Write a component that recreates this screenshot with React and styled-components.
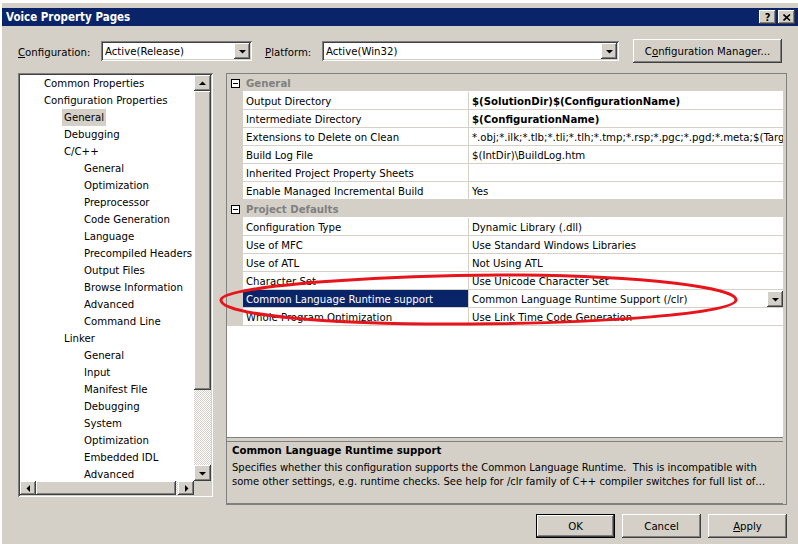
import React from 'react';
import styled, { createGlobalStyle, css } from 'styled-components';

const FACE = '#D4D0C8';
const SHADOW = '#808080';
const DARK = '#404040';
const NAVY = '#0A246A';

const GlobalStyle = createGlobalStyle`
  html, body {
    margin: 0;
    padding: 0;
    background: #fff;
  }
  body {
    font-family: "DejaVu Sans Condensed", "Liberation Sans", sans-serif;
    font-size: 11.3px;
    color: #000;
  }
  #root {
    width: 798px;
    height: 544px;
    overflow: hidden;
  }
`;

const raised = css`
  box-shadow: inset -1px -1px ${DARK}, inset 1px 1px #fff,
    inset -2px -2px ${SHADOW}, inset 2px 2px ${FACE};
`;

const sunken = css`
  box-shadow: inset 1px 1px ${SHADOW}, inset -1px -1px #fff,
    inset 2px 2px ${DARK}, inset -2px -2px ${FACE};
`;

const Page = styled.div`
  position: relative;
  width: 798px;
  height: 544px;
`;

const Frame = styled.div`
  margin: 2px 0 0 1px;
  height: 542px;
  box-sizing: border-box;
  background: ${FACE};
  border-top: 1px solid #fff;
  border-left: 1px solid #fff;
  padding-top: 5px;
  display: flex;
  flex-direction: column;
`;

const TitleBar = styled.div`
  height: 18px;
  background: ${NAVY};
  display: flex;
  align-items: center;
  padding: 0 3px 0 4px;
  color: #fff;
  font-weight: bold;
  font-size: 11.5px;
`;

const TitleText = styled.div`
  flex: 1;
`;

const CaptionButton = styled.div`
  width: 17px;
  height: 14px;
  margin-left: 2px;
  box-sizing: border-box;
  background: ${FACE};
  ${raised};
  color: #000;
  font-size: 11px;
  font-weight: bold;
  display: flex;
  align-items: center;
  justify-content: center;
`;

const Content = styled.div`
  flex: 1;
  display: flex;
  flex-direction: column;
  padding: 12px 11px 0 16px;
`;

const ConfigRow = styled.div`
  display: flex;
  align-items: center;
  height: 24px;
  padding-top: 1px;
`;

const Label = styled.div`
  width: ${p => p.$width}px;
  flex: none;
  white-space: nowrap;
  padding-top: 2px;
`;

const Combo = styled.div`
  width: ${p => p.$width}px;
  height: 20px;
  box-sizing: border-box;
  padding: 2px;
  background: #fff;
  ${sunken};
  display: flex;
  align-items: center;
  margin-right: ${p => p.$gap}px;
`;

const ComboText = styled.div`
  flex: 1;
  padding: 1px 0 0 2px;
  white-space: nowrap;
`;

const DropButton = styled.div`
  width: 16px;
  height: 16px;
  flex: none;
  box-sizing: border-box;
  background: ${FACE};
  ${raised};
  display: flex;
  align-items: center;
  justify-content: center;
`;

const PushButton = styled.div`
  width: ${p => p.$width}px;
  height: 24px;
  box-sizing: border-box;
  padding-top: 1px;
  background: ${FACE};
  ${raised};
  display: flex;
  align-items: center;
  justify-content: center;
  white-space: nowrap;
  ${p => p.$default && css`
    border: 1px solid #000;
  `}
`;

const Main = styled.div`
  display: flex;
  align-items: flex-start;
  gap: 13px;
  margin-top: 10px;
`;

const TreeBox = styled.div`
  width: 196px;
  height: 424px;
  box-sizing: border-box;
  padding: 2px;
  background: #fff;
  ${sunken};
  display: grid;
  grid-template-columns: 1fr 17px;
  grid-template-rows: 1fr 14px;
`;

const TreeList = styled.div`
  overflow: hidden;
`;

const TreeItem = styled.div`
  height: 17px;
  line-height: 17px;
  padding-left: ${p => 22 + p.$level * 20}px;
  white-space: nowrap;
`;

const ItemLabel = styled.span`
  display: inline-block;
  height: 17px;
  padding: 1px 2px 0;
  box-sizing: border-box;
  line-height: 16px;
  background: ${p => (p.$selected ? FACE : 'transparent')};
`;

const VScroll = styled.div`
  display: flex;
  flex-direction: column;
`;

const HScroll = styled.div`
  display: flex;
`;

const ScrollArrow = styled.div`
  flex: none;
  width: ${p => p.$w}px;
  height: ${p => p.$h}px;
  box-sizing: border-box;
  background: ${FACE};
  ${raised};
  display: flex;
  align-items: center;
  justify-content: center;
`;

const Thumb = styled.div`
  flex: none;
  width: ${p => p.$w}px;
  height: ${p => p.$h}px;
  box-sizing: border-box;
  background: ${FACE};
  ${raised};
`;

const Track = styled.div`
  flex: 1;
  background: repeating-conic-gradient(#fff 0 25%, ${FACE} 0 50%) 0 0 / 2px 2px;
`;

const Corner = styled.div`
  background: ${FACE};
`;

const Panel = styled.div`
  width: 561px;
  height: 432px;
  box-sizing: border-box;
  border: 1px solid ${SHADOW};
  background: ${FACE};
  padding-right: 3px;
  display: flex;
  flex-direction: column;
`;

const Grid = styled.div`
  height: 363px;
  flex: none;
  background: #fff;
  border-bottom: 1px solid ${SHADOW};
  overflow: hidden;
`;

const Row = styled.div`
  display: flex;
  height: 18px;
  background: ${p => (p.$category ? FACE : '#fff')};
`;

const Gutter = styled.div`
  width: 16px;
  flex: none;
  background: ${FACE};
  display: flex;
  align-items: center;
  justify-content: center;
`;

const Cell = styled.div`
  box-sizing: border-box;
  height: 18px;
  padding: 1px 0 0 3px;
  border-bottom: 1px solid ${FACE};
  white-space: nowrap;
  overflow: hidden;
  display: flex;
  align-items: center;
`;

const NameCell = styled(Cell)`
  width: 226px;
  flex: none;
  border-right: 1px solid ${FACE};
  background: ${p => (p.$selected ? NAVY : 'transparent')};
  color: ${p => (p.$selected ? '#fff' : '#000')};
`;

const ValueCell = styled(Cell)`
  flex: 1;
  min-width: 0;
  font-weight: ${p => (p.$bold ? 'bold' : 'normal')};
`;

const ValueText = styled.span`
  flex: 1;
  overflow: hidden;
`;

const CategoryCell = styled(Cell)`
  flex: 1;
  font-weight: bold;
  color: ${SHADOW};
  border-bottom: 1px solid #fff;
`;

const Description = styled.div`
  flex: 1;
  margin-top: 3px;
  border-top: 1px solid ${SHADOW};
  border-bottom: 1px solid ${SHADOW};
  padding: 2px 5px 0;
  line-height: 14px;
  font-size: 11.1px;
`;

const DescTitle = styled.div`
  font-weight: bold;
  font-size: 11.3px;
  margin-bottom: 3px;
`;

const DescLine = styled.div`
  white-space: pre;
`;

const ButtonRow = styled.div`
  display: flex;
  justify-content: flex-end;
  gap: 7px;
  margin-top: 9px;
`;

const Annotation = styled.svg`
  position: absolute;
  left: 0;
  top: 0;
  pointer-events: none;
`;

const Tri = ({ dir }) => {
  const pts = {
    up: '0,5 7,5 3.5,1.5',
    down: '0,2 7,2 3.5,5.5',
    left: '5,0 5,7 1.5,3.5',
    right: '2,0 2,7 5.5,3.5',
  };
  return (
    <svg width="7" height="7" viewBox="0 0 7 7">
      <polygon points={pts[dir]} fill="#000" />
    </svg>
  );
};

const MinusBox = () => (
  <svg width="9" height="9" viewBox="0 0 9 9">
    <rect x="0.5" y="0.5" width="8" height="8" fill="#fff" stroke="#000" />
    <line x1="2" y1="4.5" x2="7" y2="4.5" stroke="#000" />
  </svg>
);

const tree = [
  ['Common Properties', 0],
  ['Configuration Properties', 0],
  ['General', 1, true],
  ['Debugging', 1],
  ['C/C++', 1],
  ['General', 2],
  ['Optimization', 2],
  ['Preprocessor', 2],
  ['Code Generation', 2],
  ['Language', 2],
  ['Precompiled Headers', 2],
  ['Output Files', 2],
  ['Browse Information', 2],
  ['Advanced', 2],
  ['Command Line', 2],
  ['Linker', 1],
  ['General', 2],
  ['Input', 2],
  ['Manifest File', 2],
  ['Debugging', 2],
  ['System', 2],
  ['Optimization', 2],
  ['Embedded IDL', 2],
  ['Advanced', 2],
];

const props = [
  { cat: 'General' },
  { name: 'Output Directory', value: '$(SolutionDir)$(ConfigurationName)', bold: true },
  { name: 'Intermediate Directory', value: '$(ConfigurationName)', bold: true },
  { name: 'Extensions to Delete on Clean', value: '*.obj;*.ilk;*.tlb;*.tli;*.tlh;*.tmp;*.rsp;*.pgc;*.pgd;*.meta;$(TargetPath)' },
  { name: 'Build Log File', value: '$(IntDir)\\BuildLog.htm' },
  { name: 'Inherited Project Property Sheets', value: '' },
  { name: 'Enable Managed Incremental Build', value: 'Yes' },
  { cat: 'Project Defaults' },
  { name: 'Configuration Type', value: 'Dynamic Library (.dll)' },
  { name: 'Use of MFC', value: 'Use Standard Windows Libraries' },
  { name: 'Use of ATL', value: 'Not Using ATL' },
  { name: 'Character Set', value: 'Use Unicode Character Set' },
  { name: 'Common Language Runtime support', value: 'Common Language Runtime Support (/clr)', selected: true },
  { name: 'Whole Program Optimization', value: 'Use Link Time Code Generation' },
];

const App = () => {
  return (
    <Page>
      <GlobalStyle />
      <Frame>
        <TitleBar>
          <TitleText>Voice Property Pages</TitleText>
          <CaptionButton>?</CaptionButton>
          <CaptionButton>
            <svg width="8" height="7" viewBox="0 0 8 7">
              <path d="M0.5 0.5 L7 6.5 M7 0.5 L0.5 6.5" stroke="#000" strokeWidth="1.6" />
            </svg>
          </CaptionButton>
        </TitleBar>

        <Content>
          <ConfigRow>
            <Label $width={83}><u>C</u>onfiguration:</Label>
            <Combo $width={151} $gap={13}>
              <ComboText>Active(Release)</ComboText>
              <DropButton><Tri dir="down" /></DropButton>
            </Combo>
            <Label $width={57}><u>P</u>latform:</Label>
            <Combo $width={297} $gap={14}>
              <ComboText>Active(Win32)</ComboText>
              <DropButton><Tri dir="down" /></DropButton>
            </Combo>
            <PushButton $width={149}>C<u>o</u>nfiguration Manager...</PushButton>
          </ConfigRow>

          <Main>
            <TreeBox>
              <TreeList>
                {tree.map(([label, level, selected], i) => (
                  <TreeItem key={i} $level={level}>
                    <ItemLabel $selected={selected}>{label}</ItemLabel>
                  </TreeItem>
                ))}
              </TreeList>
              <VScroll>
                <ScrollArrow $w={17} $h={16}><Tri dir="up" /></ScrollArrow>
                <Thumb $w={17} $h={299} />
                <Track />
                <ScrollArrow $w={17} $h={16}><Tri dir="down" /></ScrollArrow>
              </VScroll>
              <HScroll>
                <ScrollArrow $w={16} $h={14}><Tri dir="left" /></ScrollArrow>
                <Thumb $w={140} $h={14} />
                <Track />
                <ScrollArrow $w={16} $h={14}><Tri dir="right" /></ScrollArrow>
              </HScroll>
              <Corner />
            </TreeBox>

            <Panel>
              <Grid>
                {props.map((p, i) =>
                  p.cat ? (
                    <Row key={i} $category>
                      <Gutter><MinusBox /></Gutter>
                      <CategoryCell>{p.cat}</CategoryCell>
                    </Row>
                  ) : (
                    <Row key={i}>
                      <Gutter />
                      <NameCell $selected={p.selected}>{p.name}</NameCell>
                      <ValueCell $bold={p.bold}>
                        <ValueText>{p.value}</ValueText>
                        {p.selected && <DropButton><Tri dir="down" /></DropButton>}
                      </ValueCell>
                    </Row>
                  )
                )}
              </Grid>
              <Description>
                <DescTitle>Common Language Runtime support</DescTitle>
                <DescLine>Specifies whether this configuration supports the Common Language Runtime.  This is incompatible with</DescLine>
                <DescLine>some other settings, e.g. runtime checks. See help for /clr family of C++ compiler switches for full list of…</DescLine>
              </Description>
            </Panel>
          </Main>

          <ButtonRow>
            <PushButton $width={79} $default>OK</PushButton>
            <PushButton $width={79}>Cancel</PushButton>
            <PushButton $width={79}><u>A</u>pply</PushButton>
          </ButtonRow>
        </Content>
      </Frame>

      <Annotation width="798" height="544" viewBox="0 0 798 544">
        <path
          d="M221,298 C222,283 400,272 520,273 C640,274 737,285 736,298 C735,312 600,321 470,322 C330,323 220,313 221,298 Z"
          fill="none"
          stroke="#E8141B"
          strokeWidth="3"
        />
      </Annotation>
    </Page>
  );
};

export default App;
